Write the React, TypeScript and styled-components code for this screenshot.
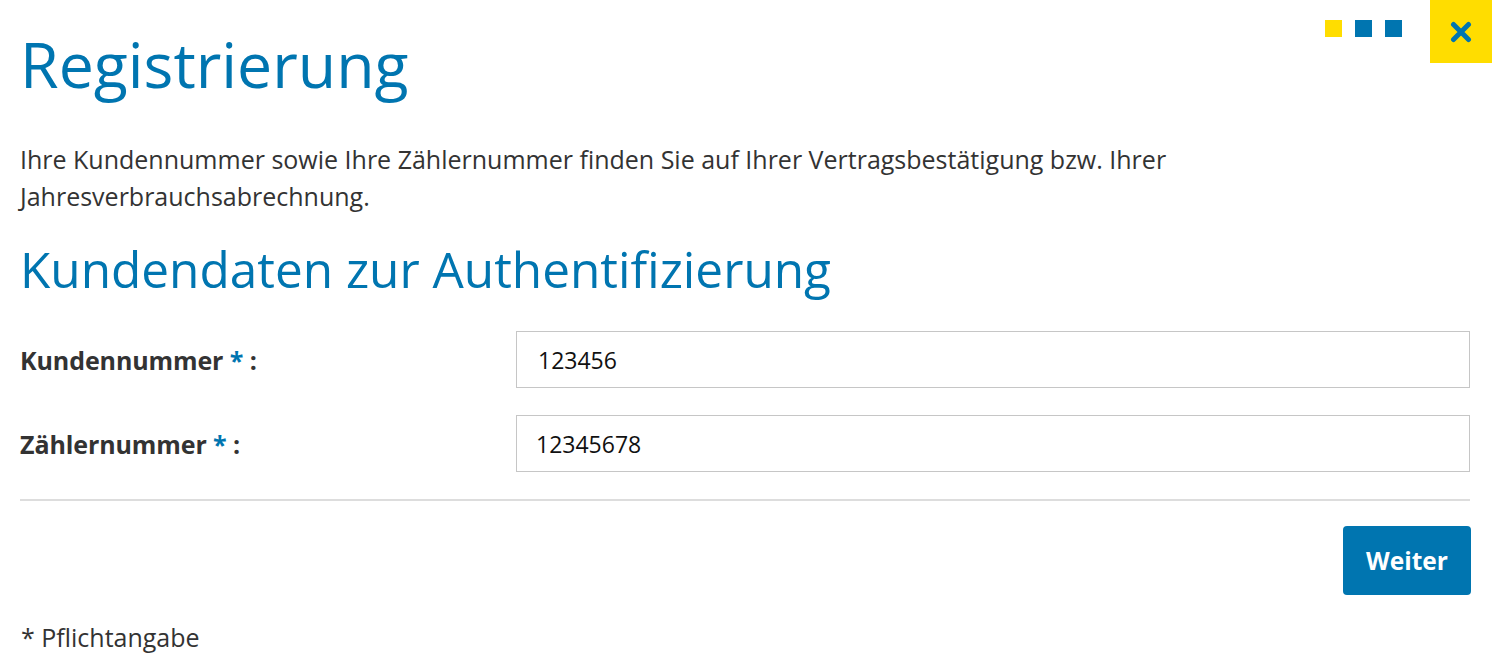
import React from "react";
import styled, { createGlobalStyle } from "styled-components";

const BLUE = "#0075b0";
const YELLOW = "#ffdd00";
const TEXT = "#333333";

const Global = createGlobalStyle`
  html, body { margin: 0; padding: 0; background: #fff; }
  body { font-family: "Open Sans", "Noto Sans", sans-serif; color: ${TEXT}; }
  * { box-sizing: border-box; }
`;

const Page = styled.div`
  position: relative;
  width: 1492px;
  height: 672px;
  padding: 0 22px 0 20px;
  overflow: hidden;
`;

const Controls = styled.div`
  position: absolute;
  top: 0;
  right: 0;
  display: flex;
  align-items: flex-start;
  gap: 28px;
`;

const Dots = styled.div`
  display: flex;
  gap: 13px;
  margin-top: 20px;
`;

const Dot = styled.span<{ $color: string }>`
  display: block;
  width: 17px;
  height: 17px;
  background: ${(p) => p.$color};
`;

const CloseButton = styled.button`
  width: 62px;
  height: 63px;
  border: 0;
  padding: 0;
  background: ${YELLOW};
  display: flex;
  align-items: center;
  justify-content: center;
  cursor: pointer;
`;

const Title = styled.h1`
  margin: 0;
  padding-top: 27px;
  font-weight: 400;
  font-size: 62.6px;
  line-height: 74px;
  color: ${BLUE};
`;

const Intro = styled.p`
  margin: 40px 0 0;
  font-size: 25px;
  line-height: 37px;
  max-width: 1450px;
`;

const SubTitle = styled.h2`
  margin: 24px 0 0;
  font-weight: 400;
  font-size: 49.5px;
  line-height: 60px;
  color: ${BLUE};
`;

const Form = styled.form`
  margin-top: 32px;
  display: flex;
  flex-direction: column;
  gap: 27px;
`;

const Row = styled.div`
  display: grid;
  grid-template-columns: 496px 1fr;
  align-items: center;
`;

const Label = styled.label`
  font-size: 25px;
  line-height: 34px;
  font-weight: 700;
  letter-spacing: -0.1px;
  color: ${TEXT};
`;

const Star = styled.span`
  color: ${BLUE};
`;

const Input = styled.input<{ $inset: number }>`
  width: 100%;
  height: 57px;
  border: 1px solid #c6c6c6;
  padding: 0 20px 0 ${(p) => p.$inset}px;
  font-family: "Open Sans", "Noto Sans", sans-serif;
  font-size: 23px;
  color: #111;
  background: #fff;
  outline: none;
`;

const Divider = styled.hr`
  margin: 27px 0 0;
  border: 0;
  height: 2px;
  background: #dddddd;
`;

const Actions = styled.div`
  display: flex;
  justify-content: flex-end;
  margin-top: 25px;
  margin-right: -1px;
`;

const Submit = styled.button`
  width: 128px;
  height: 69px;
  border: 0;
  border-radius: 4px;
  background: ${BLUE};
  color: #fff;
  font-family: "Open Sans", "Noto Sans", sans-serif;
  font-weight: 700;
  font-size: 24.5px;
  cursor: pointer;
`;

const Note = styled.p`
  margin: 24px 0 0 1px;
  font-size: 25px;
  line-height: 37px;
`;

export default function App() {
  return (
    <>
      <Global />
      <Page>
        <Controls>
          <Dots>
            <Dot $color={YELLOW} />
            <Dot $color={BLUE} />
            <Dot $color={BLUE} />
          </Dots>
          <CloseButton type="button" aria-label="Schließen">
            <svg width="22" height="22" viewBox="0 0 22 22">
              <path
                d="M3.5 3.5 L18.5 18.5 M18.5 3.5 L3.5 18.5"
                stroke={BLUE}
                strokeWidth="5"
                strokeLinecap="round"
                fill="none"
              />
            </svg>
          </CloseButton>
        </Controls>
        <Title>Registrierung</Title>
        <Intro>
          Ihre Kundennummer sowie Ihre Zählernummer finden Sie auf Ihrer
          Vertragsbestätigung bzw. Ihrer Jahresverbrauchsabrechnung.
        </Intro>
        <SubTitle>Kundendaten zur Authentifizierung</SubTitle>
        <Form onSubmit={(e) => e.preventDefault()}>
          <Row>
            <Label htmlFor="kd">
              Kundennummer <Star>*</Star> :
            </Label>
            <Input id="kd" $inset={21} defaultValue="123456" />
          </Row>
          <Row>
            <Label htmlFor="zn">
              Zählernummer <Star>*</Star> :
            </Label>
            <Input id="zn" $inset={19} defaultValue="12345678" />
          </Row>
        </Form>
        <Divider />
        <Actions>
          <Submit type="button">Weiter</Submit>
        </Actions>
        <Note>* Pflichtangabe</Note>
      </Page>
    </>
  );
}
